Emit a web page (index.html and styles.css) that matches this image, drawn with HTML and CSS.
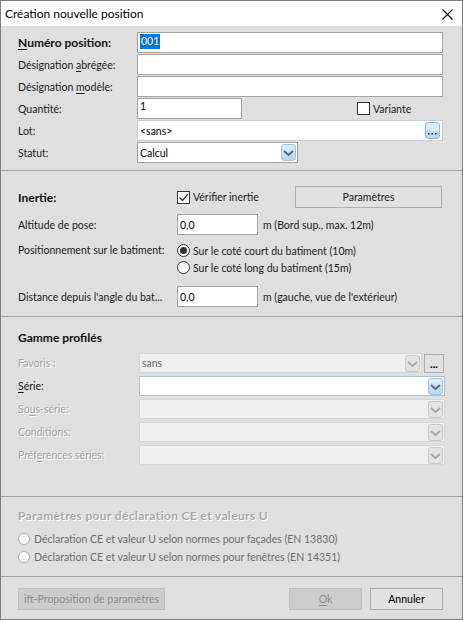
FILE: index.html
```html
<!DOCTYPE html>
<html lang="fr">
<head>
    <meta charset="UTF-8">
    <title>Création nouvelle position</title>
    <link rel="stylesheet" href="styles.css">
</head>
<body>
<div class="dialog">
    <div class="titlebar">
        <span class="title">Création nouvelle position</span>
        <svg class="close" width="11" height="11" viewBox="0 0 11 11"><path d="M0.5 0.5L10.5 10.5M10.5 0.5L0.5 10.5" stroke="#111" stroke-width="1.1" fill="none"/></svg>
    </div>

    <!-- données générales -->
    <section class="sec general">
        <div class="row">
            <span class="lbl bold"><u>N</u>uméro position:</span>
            <div class="edit wide top"><span class="selected">001</span></div>
        </div>
        <div class="row">
            <span class="lbl">Désignation <u>a</u>brégée:</span>
            <div class="edit wide"></div>
        </div>
        <div class="row">
            <span class="lbl">Désignation <u>m</u>odèle:</span>
            <div class="edit wide"></div>
        </div>
        <div class="row">
            <span class="lbl">Quantité:</span>
            <div class="edit qty top">1</div>
            <span class="check variante"><span class="box"></span>Variante</span>
        </div>
        <div class="row">
            <span class="lbl">Lot:</span>
            <div class="edit wide soft lot">
                <span class="val">&lt;sans&gt;</span>
                <span class="dots-btn"><svg width="9" height="2" viewBox="0 0 9 2"><rect x="0" y="0" width="1.5" height="1.5" fill="#1c2a36"/><rect x="3.5" y="0" width="1.5" height="1.5" fill="#1c2a36"/><rect x="7" y="0" width="1.5" height="1.5" fill="#1c2a36"/></svg></span>
            </div>
        </div>
        <div class="row">
            <span class="lbl">Statut:</span>
            <div class="combo soft statut">
                <span class="val">Calcul</span>
                <span class="arrow"><svg width="15" height="17" viewBox="0 0 15 17"><path d="M3 7L7.5 11L12 7" stroke="#566a7a" stroke-width="2" fill="none"/></svg></span>
            </div>
        </div>
    </section>
    <div class="sep"></div>

    <!-- inertie -->
    <section class="sec inertie">
        <div class="row tall">
            <span class="lbl bold">Inertie:</span>
            <span class="check verif"><span class="box"><svg width="11" height="11" viewBox="0 0 11 11"><path d="M1.5 5.5L4.5 8.5L10 2" stroke="#333" stroke-width="1.2" fill="none"/></svg></span>Vérifier inertie</span>
            <span class="btn params">Paramètres</span>
        </div>
        <div class="row gap6">
            <span class="lbl">Altitude de pose:</span>
            <div class="edit num">0,0</div>
            <span class="unit">m (Bord sup., max. 12m)</span>
        </div>
        <div class="radiorow">
            <span class="lbl">Positionnement sur le batiment:</span>
            <div class="radios">
                <span class="radio on"><span class="dot"></span>Sur le coté court du batiment (10m)</span>
                <span class="radio"><span class="dot"></span>Sur le coté long du batiment (15m)</span>
            </div>
        </div>
        <div class="row gap10">
            <span class="lbl">Distance depuis l'angle du bat...</span>
            <div class="edit num">0,0</div>
            <span class="unit">m (gauche, vue de l'extérieur)</span>
        </div>
    </section>
    <div class="sep"></div>

    <!-- gamme profilés -->
    <section class="sec gamme">
        <div class="heading bold">Gamme profilés</div>
        <div class="list">
            <div class="row c20">
                <span class="lbl dis">Favoris :</span>
                <div class="combo off favoris">
                    <span class="val grey">sans</span>
                    <span class="arrow off"><svg width="15" height="17" viewBox="0 0 15 17"><path d="M3 7L7.5 11L12 7" stroke="#a9a9a9" stroke-width="2" fill="none"/></svg></span>
                </div>
                <span class="btn more">...</span>
            </div>
            <div class="row c20">
                <span class="lbl"><u>S</u>érie:</span>
                <div class="combo serie">
                    <span class="val"></span>
                    <span class="arrow"><svg width="15" height="17" viewBox="0 0 15 17"><path d="M3 7L7.5 11L12 7" stroke="#566a7a" stroke-width="2" fill="none"/></svg></span>
                </div>
            </div>
            <div class="row c20">
                <span class="lbl dis">So<u>u</u>s-série:</span>
                <div class="combo off full">
                    <span class="val"></span>
                    <span class="arrow off"><svg width="15" height="17" viewBox="0 0 15 17"><path d="M3 7L7.5 11L12 7" stroke="#a9a9a9" stroke-width="2" fill="none"/></svg></span>
                </div>
            </div>
            <div class="row c20">
                <span class="lbl dis">Conditions:</span>
                <div class="combo off full">
                    <span class="val"></span>
                    <span class="arrow off"><svg width="15" height="17" viewBox="0 0 15 17"><path d="M3 7L7.5 11L12 7" stroke="#a9a9a9" stroke-width="2" fill="none"/></svg></span>
                </div>
            </div>
            <div class="row c20">
                <span class="lbl dis">Préf<u>e</u>rences séries:</span>
                <div class="combo off full">
                    <span class="val"></span>
                    <span class="arrow off"><svg width="15" height="17" viewBox="0 0 15 17"><path d="M3 7L7.5 11L12 7" stroke="#a9a9a9" stroke-width="2" fill="none"/></svg></span>
                </div>
            </div>
        </div>
    </section>
    <div class="sep"></div>

    <!-- déclaration CE -->
    <section class="sec ce">
        <div class="heading bold dis wide-title">Paramètres pour déclaration CE et valeurs U</div>
        <span class="radio off"><span class="dot"></span>Déclaration CE et valeur U selon normes pour façades (EN 13830)</span>
        <span class="radio off"><span class="dot"></span>Déclaration CE et valeur U selon normes pour fenêtres (EN 14351)</span>
    </section>
    <div class="sep"></div>

    <div class="footer">
        <span class="btn disabled proposal">ift-Proposition de paramètres</span>
        <span class="spacer"></span>
        <span class="btn disabled ok"><u>O</u>k</span>
        <span class="btn cancel">Annuler</span>
    </div>
</div>
</body>
</html>
```

FILE: styles.css
```css
* {
    box-sizing: border-box;
}
body {
    margin: 0;
    background: #ffffff;
    font-family: Lato, "Noto Sans", sans-serif;
    font-size: 10.5px;
    color: #1b1b1b;
}
u {
    text-decoration-thickness: 1px;
    text-underline-offset: 2px;
}
.dialog {
    width: 463px;
    height: 620px;
    border: 1px solid #7c7c7c;
    background: #dfdfdf;
    display: flex;
    flex-direction: column;
}
.titlebar {
    height: 25px;
    flex: none;
    background: #ffffff;
    display: flex;
    align-items: center;
    padding: 0 9px 0 4px;
}
.title {
    font-size: 12px;
    color: #000;
    flex: 1;
}
.close {
    margin-top: 1px;
}
.sep {
    height: 1px;
    flex: none;
    background: #a3a3a3;
}
.sec {
    display: flex;
    flex-direction: column;
    flex: none;
}
.row {
    display: flex;
    align-items: center;
    height: 21px;
    flex: none;
}
.lbl {
    flex: none;
    white-space: nowrap;
}
.bold {
    font-weight: bold;
    font-size: 12px;
    color: #111;
}
.dis {
    color: #a4a4a4;
    text-shadow: 1px 1px 0 #ffffff;
}

/* champs de saisie */
.edit {
    height: 21px;
    background: #ffffff;
    border: 1px solid #a3a3a3;
    padding: 0 2px;
    display: flex;
    align-items: center;
    color: #000;
}
.edit.top {
    align-items: flex-start;
    padding-top: 1px;
}
.soft {
    border-color: #c3d0da;
}
.wide {
    width: 306px;
}
.qty {
    width: 105px;
}
.selected {
    background: #0078d7;
    color: #ffffff;
    padding: 0 1px;
    line-height: 15px;
}
.lot {
    justify-content: space-between;
    padding-right: 2px;
}
.dots-btn {
    width: 15px;
    height: 17px;
    border: 1px solid #b0b0b0;
    border-radius: 3px;
    background: linear-gradient(#dcedfa 0, #d5e9f8 50%, #b5dbf5 50%, #b5dbf5 100%);
    display: flex;
    align-items: flex-end;
    justify-content: center;
    padding-bottom: 3px;
}
.combo {
    height: 21px;
    background: #ffffff;
    border: 1px solid #a3a3a3;
    display: flex;
    align-items: center;
    justify-content: space-between;
    padding: 0 1px 0 2px;
    color: #000;
}
.statut {
    width: 161px;
}
.arrow {
    width: 15px;
    height: 17px;
    flex: none;
    border: 1px solid #a7c3da;
    border-radius: 3px;
    background: linear-gradient(#dff0fc, #b3d9f4);
    display: flex;
}
.arrow svg {
    margin: -1px;
}
.arrow.off {
    border-color: #c9c9c9;
    background: #e3e3e3;
}
.val.grey {
    color: #6a6a6a;
}

/* cases a cocher et boutons radio */
.check {
    display: flex;
    align-items: center;
    white-space: nowrap;
}
.box {
    width: 13px;
    height: 13px;
    border: 1px solid #333333;
    background: #ffffff;
    margin-right: 3px;
    flex: none;
    display: flex;
    align-items: center;
    justify-content: center;
}
.variante {
    margin-left: 115px;
}
.radio {
    display: flex;
    align-items: center;
    height: 17px;
    white-space: nowrap;
}
.dot {
    width: 13px;
    height: 13px;
    border: 1px solid #333333;
    border-radius: 50%;
    background: #ffffff;
    margin-right: 3px;
    flex: none;
    display: flex;
    align-items: center;
    justify-content: center;
}
.radio.on .dot::after {
    content: "";
    width: 7px;
    height: 7px;
    border-radius: 50%;
    background: #333333;
}
.radio.off {
    color: #6e6e6e;
    height: 18px;
}
.radio.off .dot {
    border-color: #a9a9a9;
    background: #fbfbfb;
    width: 12px;
    height: 12px;
    margin-right: 4px;
}

/* boutons */
.btn {
    height: 22px;
    border: 1px solid #adadad;
    background: #e1e1e1;
    display: flex;
    align-items: center;
    justify-content: center;
    color: #1b1b1b;
    flex: none;
}
.btn.disabled {
    background: #cccccc;
    border-color: #bfbfbf;
    color: #8d8d8d;
}

/* section generale */
.general {
    padding: 6px 0 7px 17px;
    gap: 1px;
}
.general .lbl {
    width: 119px;
}

/* inertie */
.inertie {
    padding: 15px 0 9px 17px;
}
.inertie .lbl {
    width: 159px;
}
.row.tall {
    height: 22px;
}
.verif {
    width: 118px;
}
.params {
    width: 147px;
}
.gap6 {
    margin-top: 6px;
}
.gap10 {
    margin-top: 10px;
}
.num {
    width: 81px;
}
.unit {
    margin-left: 5px;
}
.radiorow {
    display: flex;
    margin-top: 7px;
}
.radiorow .lbl {
    line-height: 17px;
}
.radios {
    display: flex;
    flex-direction: column;
}

/* gamme */
.gamme {
    padding: 13px 0 31px 17px;
}
.heading {
    height: 16px;
    line-height: 16px;
    white-space: nowrap;
}
.list {
    margin-top: 7px;
    display: flex;
    flex-direction: column;
    gap: 3px;
}
.gamme .lbl {
    width: 121px;
}
.row.c20 {
    height: 20px;
}
.row.c20 .combo {
    height: 20px;
}
.combo.off {
    background: #efefef;
    border-color: #d6d6d6;
}
.favoris {
    width: 283px;
}
.more {
    width: 20px;
    height: 19px;
    margin-left: 2px;
    font-weight: bold;
    font-size: 11px;
    color: #000;
    align-items: flex-end;
    padding-bottom: 4px;
    line-height: 8px;
}
.serie {
    width: 306px;
    border-color: #a9c3d8;
}
.full {
    width: 306px;
}

/* declaration CE */
.ce {
    padding: 11px 0 10px 17px;
}
.ce .heading {
    margin-bottom: 6px;
}
.wide-title {
    letter-spacing: 0.35px;
    color: #a8a8a8;
}

/* pied */
.footer {
    display: flex;
    padding: 11px 19px 0 17px;
    gap: 8px;
}
.proposal {
    width: 147px;
}
.spacer {
    flex: 1;
}
.ok, .cancel {
    width: 73px;
}
.cancel {
    color: #000;
}
```
